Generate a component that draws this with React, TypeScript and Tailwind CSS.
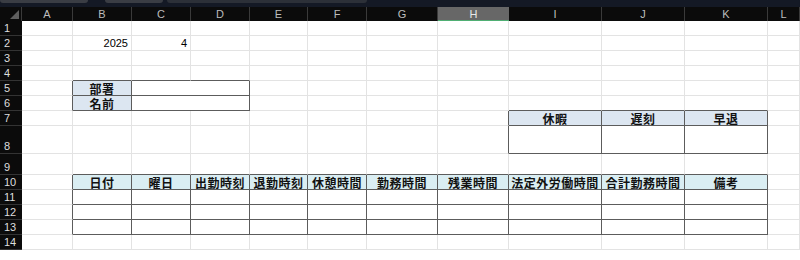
import React from "react";

const COLS = ["A", "B", "C", "D", "E", "F", "G", "H", "I", "J", "K", "L"];
const ROWS = [1, 2, 3, 4, 5, 6, 7, 8, 9, 10, 11, 12, 13, 14];

// bordered blocks on the sheet (col index: A = 0)
const TABLES = [
  { r0: 5, r1: 6, c0: 1, c1: 3 },
  { r0: 7, r1: 8, c0: 8, c1: 10 },
  { r0: 10, r1: 13, c0: 1, c1: 10 },
];

const inTable = (r: number, c: number) =>
  TABLES.some((t) => r >= t.r0 && r <= t.r1 && c >= t.c0 && c <= t.c1);

type Cell = { text: string; kind: "label" | "head" | "num" };

const CELLS: Record<string, Cell> = {
  "2-1": { text: "2025", kind: "num" },
  "2-2": { text: "4", kind: "num" },
  "5-1": { text: "部署", kind: "label" },
  "6-1": { text: "名前", kind: "label" },
  "7-8": { text: "休暇", kind: "label" },
  "7-9": { text: "遅刻", kind: "label" },
  "7-10": { text: "早退", kind: "label" },
  "10-1": { text: "日付", kind: "head" },
  "10-2": { text: "曜日", kind: "head" },
  "10-3": { text: "出勤時刻", kind: "head" },
  "10-4": { text: "退勤時刻", kind: "head" },
  "10-5": { text: "休憩時間", kind: "head" },
  "10-6": { text: "勤務時間", kind: "head" },
  "10-7": { text: "残業時間", kind: "head" },
  "10-8": { text: "法定外労働時間", kind: "head" },
  "10-9": { text: "合計勤務時間", kind: "head" },
  "10-10": { text: "備考", kind: "head" },
};

// C:D merged on rows 5 and 6
const isMerged = (r: number, c: number) => (r === 5 || r === 6) && c === 2;
const isSkipped = (r: number, c: number) => (r === 5 || r === 6) && c === 3;

function clsx(...parts: (string | false | undefined)[]) {
  return parts.filter(Boolean).join(" ");
}

function SheetCell({ r, c }: { r: number; c: number }) {
  const span = isMerged(r, c) ? 2 : 1;
  const last = c + span - 1;
  const darkRight = inTable(r, last) || inTable(r, last + 1);
  const darkBottom = inTable(r, c) || inTable(r + 1, c);
  const cell = CELLS[`${r}-${c}`];

  return (
    <div
      className={clsx(
        "flex items-center overflow-hidden whitespace-nowrap border-r border-b leading-[13px]",
        span === 2 && "col-span-2",
        darkRight ? "border-r-[#5c5c5c]" : "border-r-[#e3e3e3]",
        darkBottom ? "border-b-[#5c5c5c]" : "border-b-[#e3e3e3]",
        cell?.kind === "label" && "bg-[#dce6f1]",
        cell?.kind === "head" && "bg-[#daeef3]",
        cell?.kind === "num" ? "justify-end pr-[3px] text-[11px] text-black" : "justify-center",
        (cell?.kind === "label" || cell?.kind === "head") &&
          "font-['Noto_Sans_CJK_JP',sans-serif] text-[12px] font-semibold tracking-[0.5px] text-[#111]"
      )}
    >
      {cell?.text}
    </div>
  );
}

export default function App() {
  return (
    <div className="w-[800px] h-[260px] bg-white overflow-hidden font-['Liberation_Sans','Noto_Sans_CJK_JP',sans-serif]">
      {/* top edge of the formula bar */}
      <div className="h-[7px] bg-[#141925] flex gap-[4px]">
        <div className="w-[88px] h-[3px] rounded-b-[3px] bg-[#3a3d44]" />
        <div className="w-[58px] h-[3px] rounded-b-[3px] bg-[#3a3d44] ml-[13px]" />
        <div className="w-[200px] h-[3px] rounded-b-[3px] bg-[#2c3038]" />
      </div>

      <div className="grid grid-cols-[22px_51px_59px_59px_59px_58px_59px_71px_71px_93px_83px_83px_32px] grid-rows-[14px_repeat(7,15px)_28px_21px_repeat(5,15px)]">
        {/* corner */}
        <div className="bg-[#0b0b0b] flex items-end justify-end p-[2px] border-r border-r-[#3a3a3a]">
          <svg width="9" height="9" viewBox="0 0 9 9">
            <polygon points="9,0 9,9 0,9" fill="#5f5f5f" />
          </svg>
        </div>
        {COLS.map((col) =>
          col === "H" ? (
            <div
              key={col}
              className="bg-[#676767] border-b border-b-[#4fae73] flex items-center justify-center text-[11px] leading-[12px] text-[#e8e8e8]"
            >
              {col}
            </div>
          ) : (
            <div
              key={col}
              className="bg-[#0b0b0b] border-r border-r-[#3a3a3a] flex items-center justify-center text-[11px] leading-[12px] text-[#bdbdbd]"
            >
              {col}
            </div>
          )
        )}

        {ROWS.map((r) => (
          <React.Fragment key={r}>
            <div className="bg-[#0b0b0b] border-b border-b-[#333] flex items-end pl-[4px] pb-[1px] text-[11px] leading-[12px] text-[#dedede]">
              {r}
            </div>
            {COLS.map((_, c) =>
              isSkipped(r, c) ? null : <SheetCell key={c} r={r} c={c} />
            )}
          </React.Fragment>
        ))}
      </div>
    </div>
  );
}
